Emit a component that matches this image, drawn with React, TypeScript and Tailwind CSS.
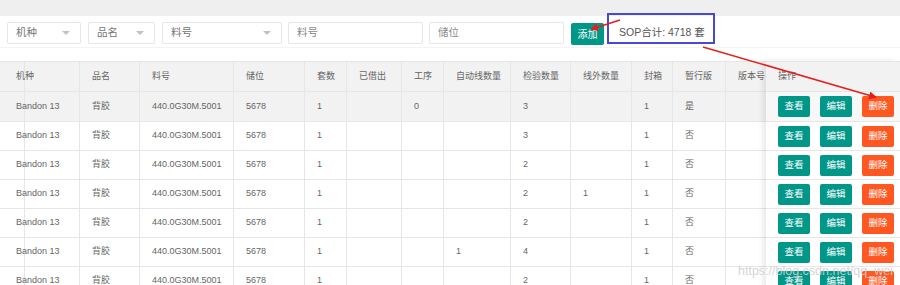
import React from "react";

const cols =
    "grid grid-cols-[4px_76px_60px_94px_71px_42px_55px_42px_67px_60px_61px_41px_53px_60px]";

const headers = [
    "",
    "机种",
    "品名",
    "料号",
    "储位",
    "套数",
    "已借出",
    "工序",
    "自动线数量",
    "检验数量",
    "线外数量",
    "封箱",
    "暂行版",
    "版本号",
];

const base = ["", "Bandon 13", "背胶", "440.0G30M.5001", "5678", "1", ""];

const rows: string[][] = [
    [...base, "0", "", "3", "", "1", "是", ""],
    [...base, "", "", "3", "", "1", "否", ""],
    [...base, "", "", "2", "", "1", "否", ""],
    [...base, "", "", "2", "1", "1", "否", ""],
    [...base, "", "", "2", "", "1", "否", ""],
    [...base, "", "1", "4", "", "1", "否", ""],
    [...base, "", "", "2", "", "1", "否", ""],
];

function SelectBox({ label, width }: { label: string; width: string }) {
    return (
        <div
            className={`${width} flex h-[22px] items-center justify-between rounded-[2px] border border-[#e6e6e6] bg-white pl-[8px] pr-[10px] text-[10.5px] text-[#757575]`}
        >
            <span>{label}</span>
            <span className="h-0 w-0 border-x-[4px] border-t-[4px] border-x-transparent border-t-[#c2c2c2]" />
        </div>
    );
}

function InputBox({ label, width }: { label: string; width: string }) {
    return (
        <div
            className={`${width} flex h-[22px] items-center rounded-[2px] border border-[#e6e6e6] bg-white pl-[8px] text-[10.5px] text-[#8a8a8a]`}
        >
            {label}
        </div>
    );
}

function ActionButton({ label, danger }: { label: string; danger?: boolean }) {
    return (
        <button
            className={`flex h-[21px] w-[32px] items-center justify-center rounded-[2px] text-[9.5px] text-white ${
                danger ? "bg-[#ff5722]" : "bg-[#009688]"
            }`}
        >
            {label}
        </button>
    );
}

export default function App() {
    return (
        <div
            className="relative h-[285px] w-[900px] overflow-hidden bg-white text-[#666]"
            style={{ fontFamily: '"Liberation Sans", "Noto Sans CJK SC", sans-serif' }}
        >
            <div className="h-4 bg-[#efefef]" />

            <div className="flex h-[32px] items-start gap-[7px] border-b border-[#f3f3f3] pl-[7px] pt-[6px]">
                <SelectBox label="机种" width="w-[74px]" />
                <SelectBox label="品名" width="w-[67px]" />
                <SelectBox label="料号" width="w-[120px]" />
                <InputBox label="料号" width="w-[135px] -ml-[1px]" />
                <InputBox label="储位" width="w-[135px] -ml-[1px]" />
                <button className="mt-[1px] flex h-[22px] w-[33px] items-center justify-center rounded-[2px] bg-[#009688] text-[10px] text-white">
                    添加
                </button>
                <div className="-ml-[4px] -mt-[9px] flex h-[31px] w-[108px] items-end border-2 border-[#4848d2] pb-[1px] pl-[10px] text-[10.5px] text-[#555]">
                    SOP合计: 4718 套
                </div>
            </div>

            <div className="mt-[13px] flex">
                <div className="w-[766px] overflow-hidden">
                    <div className={`${cols} h-[31px] border-y border-[#e6e6e6] bg-[#f2f2f2]`}>
                        {headers.map((h, i) => (
                            <div
                                key={i}
                                className="flex items-center whitespace-nowrap border-r border-[#e6e6e6] px-[12px] text-[9px]"
                            >
                                {h}
                            </div>
                        ))}
                    </div>
                    {rows.map((row, r) => (
                        <div
                            key={r}
                            className={`${cols} ${r === 0 ? "h-[30px] bg-[#f2f2f2]" : "h-[29px]"} border-b border-[#e6e6e6]`}
                        >
                            {row.map((c, i) => (
                                <div
                                    key={i}
                                    className="flex items-center whitespace-nowrap border-r border-[#e6e6e6] px-[12px] text-[9px]"
                                >
                                    {c}
                                </div>
                            ))}
                        </div>
                    ))}
                </div>

                <div className="relative z-10 w-[134px] bg-white shadow-[-3px_0_6px_rgba(0,0,0,0.09)]">
                    <div className="flex h-[31px] items-center border-y border-[#e6e6e6] bg-[#f2f2f2] pl-[12px] text-[9px]">
                        操作
                    </div>
                    {rows.map((_, r) => (
                        <div
                            key={r}
                            className={`flex items-center gap-[10px] border-b border-[#e6e6e6] pl-[12px] ${
                                r === 0 ? "h-[30px] bg-[#f7f7f7]" : "h-[29px]"
                            }`}
                        >
                            <ActionButton label="查看" />
                            <ActionButton label="编辑" />
                            <ActionButton label="删除" danger />
                        </div>
                    ))}
                </div>
            </div>

            <div className="pointer-events-none absolute left-[738px] top-[262px] z-20 whitespace-nowrap text-[12.5px] text-[#d0d0d0]/90">
                https://blog.csdn.net/qq_wei
            </div>

            <svg
                className="pointer-events-none absolute left-0 top-0 z-30"
                width="900"
                height="285"
                viewBox="0 0 900 285"
            >
                <defs>
                    <marker
                        id="head"
                        markerWidth="8"
                        markerHeight="8"
                        refX="6"
                        refY="4"
                        orient="auto"
                        markerUnits="userSpaceOnUse"
                    >
                        <path d="M0 0 L8 4 L0 8 Z" fill="#e3201b" />
                    </marker>
                </defs>
                <line x1="620" y1="20" x2="592" y2="29" stroke="#e3201b" strokeWidth="1.5" markerEnd="url(#head)" />
                <line x1="703" y1="47" x2="875" y2="97" stroke="#e3201b" strokeWidth="1.5" markerEnd="url(#head)" />
            </svg>
        </div>
    );
}
